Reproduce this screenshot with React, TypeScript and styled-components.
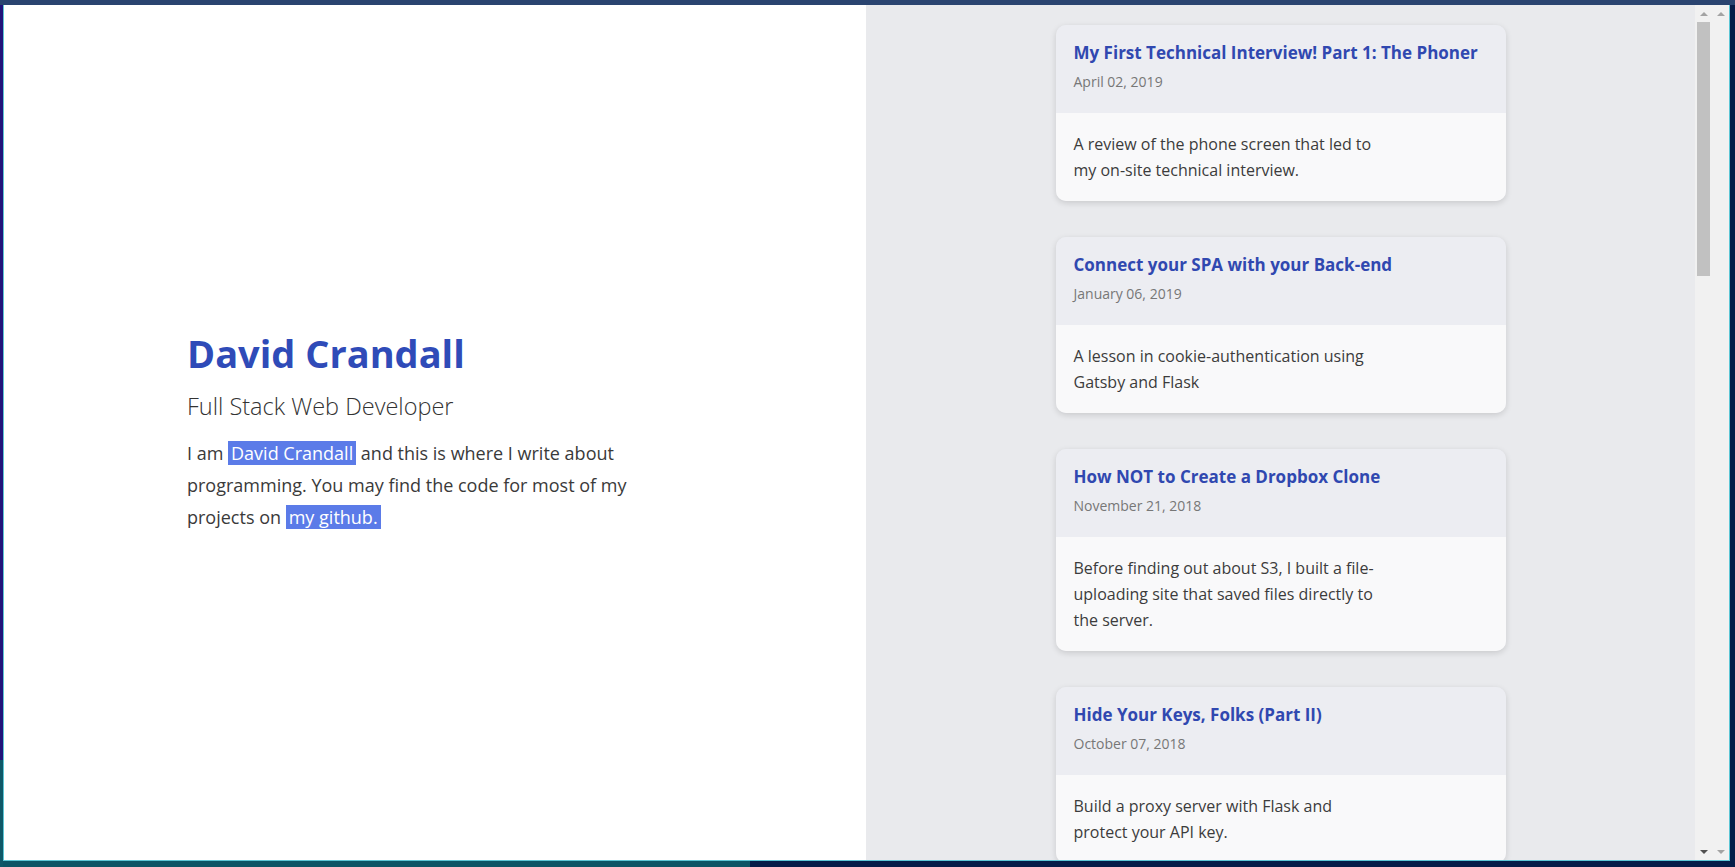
import React from "react";
import styled, { createGlobalStyle } from "styled-components";

const GlobalStyle = createGlobalStyle`
  html, body {
    margin: 0;
    padding: 0;
    height: 100%;
    overflow: hidden;
  }
  body {
    font-family: "Open Sans", "Noto Sans", sans-serif;
    background:
      linear-gradient(#2a4470, #2a4470) top left / 100% 5px no-repeat,
      linear-gradient(to bottom, #21137a 0 760px, #0e5868 760px) top left / 3px 100% no-repeat,
      linear-gradient(to right, #0c5565 0 750px, #061c48 750px);
  }
`;

const Desktop = styled.div`
  height: 867px;
  padding: 5px 5px 0 3px;
  box-sizing: border-box;
`;

const Window = styled.div`
  height: 856px;
  box-sizing: border-box;
  border: 1px solid #5cc6d5;
  border-top: none;
  display: flex;
  overflow: hidden;
`;

const Page = styled.div`
  flex: 1;
  display: flex;
  min-width: 0;
`;

const LeftPanel = styled.section`
  width: 862px;
  flex: none;
  background: #ffffff;
  display: flex;
  flex-direction: column;
  justify-content: center;
  padding: 0 0 4px 183px;
  box-sizing: border-box;
`;

const Name = styled.h1`
  margin: 0;
  font-family: "Open Sans", "Noto Sans", sans-serif;
  font-weight: 700;
  font-size: 38px;
  line-height: 48px;
  color: #2f4bb8;
`;

const Role = styled.h2`
  margin: 13px 0 0;
  font-family: "Open Sans", "Noto Sans", sans-serif;
  font-weight: 300;
  font-size: 23.5px;
  line-height: 32px;
  color: #333333;
`;

const Intro = styled.p`
  margin: 15px 0 0;
  max-width: 490px;
  font-size: 18px;
  line-height: 32px;
  color: #3a3a3a;
`;

const Highlight = styled.span`
  background: #5b7be8;
  color: #ffffff;
  padding: 0 3px;
`;

const RightPanel = styled.div`
  flex: 1;
  display: flex;
  min-width: 0;
`;

const Feed = styled.main`
  flex: 1;
  background: #e9eaed;
  overflow: hidden;
  display: flex;
  flex-direction: column;
  align-items: center;
  gap: 36px;
  padding-top: 20px;
`;

const Card = styled.article`
  width: 450px;
  flex: none;
  border-radius: 10px;
  overflow: hidden;
  box-shadow: 0 2px 6px rgba(0, 0, 0, 0.14);
`;

const CardHeader = styled.header`
  background: #ecedf2;
  padding: 16px 18px 21px;
`;

const CardTitle = styled.h3`
  margin: 0;
  font-family: "Open Sans", "Noto Sans", sans-serif;
  font-weight: 700;
  font-size: 17px;
  line-height: 24px;
  color: #3048b0;
`;

const CardDate = styled.div`
  margin-top: 7px;
  font-size: 14px;
  line-height: 20px;
  color: #777777;
`;

const CardBody = styled.div`
  background: #f9f9fa;
  padding: 18px;
`;

const CardText = styled.p`
  margin: 0;
  max-width: 305px;
  font-size: 16px;
  line-height: 26px;
  color: #3c3c3c;
`;

const Scrollbar = styled.div`
  width: 17px;
  flex: none;
  background: #f1f1f1;
  display: flex;
  flex-direction: column;
`;

const ArrowButton = styled.div`
  height: 17px;
  flex: none;
  display: flex;
  align-items: center;
  justify-content: center;
`;

const Arrow = styled.span<{ $dir: "up" | "down"; $active?: boolean }>`
  width: 0;
  height: 0;
  border-left: 4px solid transparent;
  border-right: 4px solid transparent;
  ${(p) =>
    p.$dir === "up"
      ? `border-bottom: 4px solid ${p.$active ? "#505050" : "#a3a3a3"};`
      : `border-top: 4px solid ${p.$active ? "#505050" : "#a3a3a3"};`}
`;

const Track = styled.div`
  flex: 1;
  display: flex;
  flex-direction: column;
`;

const Thumb = styled.div<{ $size: number }>`
  height: ${(p) => p.$size}px;
  margin: 0 2px;
  background: #c1c1c1;
`;

type Post = { title: string; date: string; text: string };

const posts: Post[] = [
  {
    title: "My First Technical Interview! Part 1: The Phoner",
    date: "April 02, 2019",
    text: "A review of the phone screen that led to my on-site technical interview.",
  },
  {
    title: "Connect your SPA with your Back-end",
    date: "January 06, 2019",
    text: "A lesson in cookie-authentication using Gatsby and Flask",
  },
  {
    title: "How NOT to Create a Dropbox Clone",
    date: "November 21, 2018",
    text: "Before finding out about S3, I built a file-uploading site that saved files directly to the server.",
  },
  {
    title: "Hide Your Keys, Folks (Part II)",
    date: "October 07, 2018",
    text: "Build a proxy server with Flask and protect your API key.",
  },
];

function ScrollBar({ thumb, canDown }: { thumb?: number; canDown?: boolean }) {
  return (
    <Scrollbar>
      <ArrowButton>
        <Arrow $dir="up" />
      </ArrowButton>
      <Track>{thumb ? <Thumb $size={thumb} /> : null}</Track>
      <ArrowButton>
        <Arrow $dir="down" $active={canDown} />
      </ArrowButton>
    </Scrollbar>
  );
}

export default function App() {
  return (
    <>
      <GlobalStyle />
      <Desktop>
        <Window>
          <Page>
            <LeftPanel>
              <Name>David Crandall</Name>
              <Role>Full Stack Web Developer</Role>
              <Intro>
                I am <Highlight>David Crandall</Highlight> and this is where I write about
                programming. You may find the code for most of my projects on{" "}
                <Highlight>my github.</Highlight>
              </Intro>
            </LeftPanel>
            <RightPanel>
              <Feed>
                {posts.map((p) => (
                  <Card key={p.title}>
                    <CardHeader>
                      <CardTitle>{p.title}</CardTitle>
                      <CardDate>{p.date}</CardDate>
                    </CardHeader>
                    <CardBody>
                      <CardText>{p.text}</CardText>
                    </CardBody>
                  </Card>
                ))}
              </Feed>
              <ScrollBar thumb={254} canDown />
            </RightPanel>
          </Page>
          <ScrollBar />
        </Window>
      </Desktop>
    </>
  );
}
